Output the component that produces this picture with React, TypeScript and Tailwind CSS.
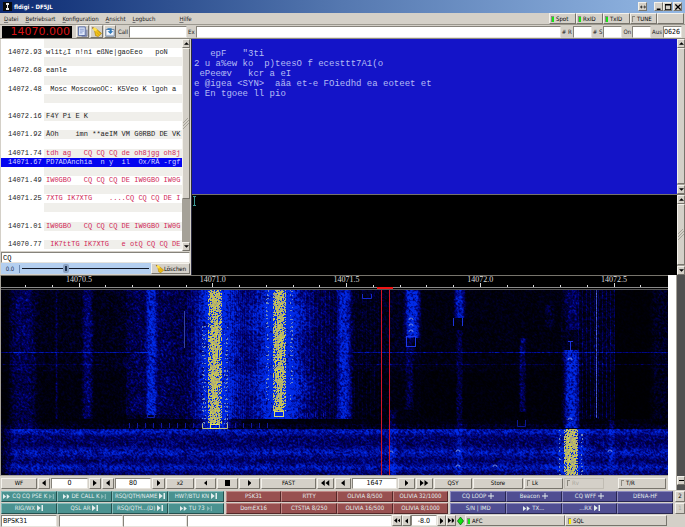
import { useEffect, useRef } from "react";
import type { ReactNode } from "react";

const BEVEL =
  "flex items-center justify-center overflow-hidden whitespace-nowrap border border-t-[#f4f2ec] border-l-[#f4f2ec] border-r-[#77746c] border-b-[#77746c] bg-[#d4d0c8] text-black";
const SUNKEN =
  "min-w-0 border border-t-[#86837b] border-l-[#86837b] border-r-[#e6e3dc] border-b-[#e6e3dc] bg-white text-black outline-none";

/* ---------- small glyphs ---------- */

type Kind = "left" | "right" | "left2" | "right2" | "stop" | "up" | "down" | "next" | "plus";

const GLYPHS: Record<Kind, { w: number; d: string }> = {
  left: { w: 5, d: "M5 0V8L0 4Z" },
  right: { w: 5, d: "M0 0V8L5 4Z" },
  left2: { w: 11, d: "M5 0V8L0 4ZM11 0V8L6 4Z" },
  right2: { w: 11, d: "M0 0V8L5 4ZM6 0V8L11 4Z" },
  stop: { w: 7, d: "M0 0H7V8H0Z" },
  up: { w: 8, d: "M0 6H8L4 2Z" },
  down: { w: 8, d: "M0 2H8L4 6Z" },
  next: { w: 8, d: "M0 0V8L5 4ZM6 0H8V8H6Z" },
  plus: { w: 8, d: "M3.4 0H4.6V3.4H8V4.6H4.6V8H3.4V4.6H0V3.4H3.4Z" },
};

function Glyph({ kind, className = "h-[6px]" }: { kind: Kind; className?: string }) {
  const g = GLYPHS[kind];
  return (
    <svg viewBox={`0 0 ${g.w} 8`} className={`${className} w-auto shrink-0`} fill="currentColor" aria-hidden="true">
      <path d={g.d} />
    </svg>
  );
}

function Broom({ className }: { className: string }) {
  return (
    <svg viewBox="0 0 12 12" className={className} aria-hidden="true">
      <path d="M1.5 1.5L5 5" stroke="#9a6b1e" strokeWidth="1.6" />
      <path d="M4 5.5L6 3.5L11.5 8L8 11.5L5 10.5Z" fill="#f2c318" stroke="#a87b06" strokeWidth="0.7" />
      <path d="M2.5 2L4.5 1.5L7 4L4.5 6L2 4Z" fill="#ffe04a" />
      <path d="M6.5 7L9 10M8 6L10.5 8.5" stroke="#b98a0a" strokeWidth="0.6" />
    </svg>
  );
}

/* ---------- title bar and menu ---------- */

function TitleBar() {
  return (
    <header className="flex h-[13px] shrink-0 items-center bg-linear-to-r from-[#0c2a72] via-[#5578b0] to-[#94b8e4] pl-[2px] pr-[3px]">
      <svg viewBox="0 0 9 9" className="ml-px h-[9px] w-[9px]" aria-hidden="true">
        <rect width="9" height="9" fill="#0a0a0a" />
        <path d="M3 1H6V3H5V6H6V8H3V6H4V3H3Z" fill="#e8e8e8" />
      </svg>
      <h1 className="ml-[2px] flex-1 text-[6px] font-bold text-white">fldigi - DF5JL</h1>
      <button aria-label="Switch" className={`${BEVEL} mr-[7px] h-[9px] w-[9px]`}>
        <svg viewBox="0 0 10 6" className="h-[4px] w-[6px]" aria-hidden="true">
          <path d="M0 3L3 0V6ZM10 3L7 0V6ZM2 2.5H8V3.5H2Z" fill="#222" />
        </svg>
      </button>
      <button aria-label="Minimize" className={`${BEVEL} h-[9px] w-[9px]`}>
        <svg viewBox="0 0 8 8" className="h-[6px] w-[6px]" aria-hidden="true">
          <path d="M1 6H6V8H1Z" />
        </svg>
      </button>
      <button aria-label="Maximize" className={`${BEVEL} h-[9px] w-[9px]`}>
        <svg viewBox="0 0 8 8" className="h-[6px] w-[6px]" aria-hidden="true">
          <path d="M0 0H8V8H0ZM1 2V7H7V2Z" fillRule="evenodd" />
        </svg>
      </button>
      <button aria-label="Close" className={`${BEVEL} ml-px h-[9px] w-[9px]`}>
        <svg viewBox="0 0 8 8" className="h-[6px] w-[6px]" aria-hidden="true">
          <path d="M0.5 0.5L7.5 7.5M7.5 0.5L0.5 7.5" stroke="#000" strokeWidth="1.7" />
        </svg>
      </button>
    </header>
  );
}

function Led({ color }: { color: string }) {
  return <span className={`mr-[2px] h-[6px] w-[3px] shrink-0 border-l border-t border-[#8b887f] ${color}`} />;
}

const MENUS = [
  { label: "atei", key: "D", gap: "mr-[7px]" },
  { label: "etriebsart", key: "B", gap: "mr-[7px]" },
  { label: "onfiguration", key: "K", gap: "mr-[7px]" },
  { label: "nsicht", key: "A", gap: "mr-[7px]" },
  { label: "ogbuch", key: "L", gap: "mr-[24px]" },
  { label: "ilfe", key: "H", gap: "" },
];

const TOGGLES = [
  { label: "Spot", color: "bg-[#14e414]" },
  { label: "RxID", color: "bg-[#14e414]" },
  { label: "TxID", color: "bg-[#14e414]" },
  { label: "TUNE", color: "bg-[#d4d0c8]" },
];

function MenuBar() {
  return (
    <nav className="flex h-[12px] shrink-0 items-center border-b border-[#9b988f] pl-[4px] pr-px">
      {MENUS.map((m) => (
        <button key={m.key} className={m.gap}>
          <span className="underline decoration-[#777] decoration-1 underline-offset-1">{m.key}</span>
          {m.label}
        </button>
      ))}
      <div className="flex-1" />
      {TOGGLES.map((t) => (
        <button key={t.label} className={`${BEVEL} h-[11px] w-[27px] justify-start pl-px`}>
          <Led color={t.color} />
          {t.label}
        </button>
      ))}
      <div className={`${BEVEL} h-[11px] w-[27px]`} />
    </nav>
  );
}

function Field({ label, value, wide }: { label: string; value?: string; wide?: string }) {
  return (
    <label className={`flex h-full items-center ${wide ?? ""}`}>
      <span className="whitespace-nowrap px-px">{label}</span>
      <input
        defaultValue={value}
        className={`${SUNKEN} h-[12px] text-[7px] ${wide ? "flex-1" : "w-[19px]"}`}
      />
    </label>
  );
}

function ToolBar() {
  return (
    <div className="flex h-[14px] shrink-0 items-center border-b border-[#8b887f] pl-[2px] pr-[3px]">
      <output className="mr-[4px] flex h-[12px] w-[70px] items-center justify-end bg-black pr-[2px] text-[11px] leading-none text-[#d81414] font-['DejaVu_Sans',sans-serif]">
        14070.000
      </output>
      <div className="mr-px flex gap-px">
        <button aria-label="Edit log" className={`${BEVEL} h-[13px] w-[13px]`}>
          <svg viewBox="0 0 12 12" className="h-[11px] w-[11px]" aria-hidden="true">
            <path d="M1.5 1H9V10.5H1.5Z" fill="#dfe8fa" stroke="#4b62a0" />
            <path d="M3 3.5H7.5M3 5.5H7.5M3 7.5H6" stroke="#7288c4" strokeWidth="0.9" />
            <path d="M10.8 4V11H5" fill="none" stroke="#55629a" />
          </svg>
        </button>
        <button aria-label="Clear entries" className={`${BEVEL} h-[13px] w-[13px]`}>
          <Broom className="h-[11px] w-[11px]" />
        </button>
        <button aria-label="Save entry" className={`${BEVEL} h-[13px] w-[12px]`}>
          <svg viewBox="0 0 12 12" className="h-[10px] w-[10px]" aria-hidden="true">
            <path d="M1 3H11V11H1Z" fill="#f6f9ff" stroke="#5b7696" />
            <path d="M3 1.5H8V5H10L6.5 8.5L3 5H5.5V3.5H3Z" fill="#2f78b8" />
            <path d="M2 10H10" stroke="#9fb2c8" />
          </svg>
        </button>
      </div>
      <Field label="Call" wide="w-[70px]" />
      <Field label="Ex" wide="flex-1" />
      <Field label="# R" />
      <Field label="# S" />
      <Field label="On" />
      <Field label="Aus" value="0626" />
    </div>
  );
}

/* ---------- signal browser ---------- */

const ROWS: { f?: string; t?: string; tone?: "cq" | "sel" }[] = [
  {},
  { f: "14072.93", t: "wlit¿I n!ni eßNe|gaoEeo   poN" },
  {},
  { f: "14072.68", t: "eanle" },
  {},
  { f: "14072.48", t: " Mosc MoscowoOC: K5Veo K lgoh a" },
  {},
  {},
  { f: "14072.16", t: "F4Y Pi E K" },
  {},
  { f: "14071.92", t: "ÅOh    imn **aeIM VM G0RBD DE VK" },
  {},
  { f: "14071.74", t: "tdh ag   CQ CQ CQ de oh8jgg oh8j", tone: "cq" },
  { f: "14071.67", t: "PD7ADAnchia  n y  il  Ox/RÅ -rgf", tone: "sel" },
  {},
  { f: "14071.49", t: "IW0GBO   CQ CQ CQ DE IW0GBO IW0G", tone: "cq" },
  {},
  { f: "14071.25", t: "7XTG IK7XTG    ....CQ CQ CQ DE I", tone: "cq" },
  {},
  {},
  { f: "14071.01", t: "IW0GBO   CQ CQ CQ DE IW0GBO IW0G", tone: "cq" },
  {},
  { f: "14070.77", t: " IK7ttTG IK7XTG   e otQ CQ CQ DE", tone: "cq" },
];

function ScrollBar({ thumb, grip }: { thumb: string; grip: string }) {
  return (
    <div className="flex w-[8px] shrink-0 flex-col bg-[#a5a198]">
      <button aria-label="Scroll up" className={`${BEVEL} h-[9px] w-[8px]`}>
        <Glyph kind="up" className="h-[5px]" />
      </button>
      <div className={`${BEVEL} w-[8px] ${thumb}`}>
        <svg viewBox="0 0 6 12" className={`h-[12px] w-[6px] ${grip}`} aria-hidden="true">
          <path d="M0 5L5 0M0 8L6 2M0 11L6 5" stroke="#9b978d" strokeWidth="0.8" />
        </svg>
      </div>
      <div className="flex-1" />
      <button aria-label="Scroll down" className={`${BEVEL} mt-auto h-[9px] w-[8px]`}>
        <Glyph kind="down" className="h-[5px]" />
      </button>
    </div>
  );
}

function SignalBrowser() {
  return (
    <section className="flex w-[191px] shrink-0 flex-col bg-[#d4d0c8] pl-px pr-px">
      <div className="flex h-[212px] bg-white">
        <ul className="flex min-w-0 flex-1 flex-col pb-[2px] text-[7px] leading-none font-['Liberation_Mono',monospace]">
          {ROWS.map((r, i) => (
            <li key={i} className="min-h-0 flex-1">
              <button
                className={`flex h-full w-full whitespace-pre text-left ${
                  r.tone === "sel" ? "bg-[#0404f0] text-[#d8dcff]" : r.tone === "cq" ? "text-[#d02858]" : "text-[#222]"
                }`}
              >
                <span
                  className={`flex h-full w-[43px] shrink-0 items-center pl-[7px] ${
                    r.tone === "sel" ? "text-[#d8dcff]" : "text-[#222]"
                  }`}
                >
                  {r.f}
                </span>
                <span
                  className={`flex h-full min-w-0 flex-1 items-center overflow-hidden pl-[2px] ${
                    r.tone !== "sel" && i % 2 === 0 ? "bg-[#f0efeb]" : ""
                  }`}
                >
                  {r.t}
                </span>
              </button>
            </li>
          ))}
        </ul>
        <ScrollBar thumb="h-[151px]" grip="" />
      </div>
      <input
        aria-label="Search pattern"
        defaultValue="CQ"
        className={`${SUNKEN} mt-px h-[11px] px-px text-[7px] leading-none font-['Liberation_Mono',monospace]`}
      />
      <div className="flex h-[11px] items-center bg-[#b4cff0]">
        <output className="w-[19px] border-r border-[#6d8bb5] text-center text-[#14284c]">0.0</output>
        <input
          type="range"
          aria-label="Squelch level"
          defaultValue={34}
          className="mx-[2px] h-[9px] min-w-0 flex-1 appearance-none bg-transparent [&::-webkit-slider-runnable-track]:h-px [&::-webkit-slider-runnable-track]:bg-[#101828] [&::-webkit-slider-thumb]:-mt-[4px] [&::-webkit-slider-thumb]:h-[9px] [&::-webkit-slider-thumb]:w-[6px] [&::-webkit-slider-thumb]:appearance-none [&::-webkit-slider-thumb]:rounded-[2px] [&::-webkit-slider-thumb]:border-2 [&::-webkit-slider-thumb]:border-[#8da3c2] [&::-webkit-slider-thumb]:bg-[#1f3350]"
        />
        <button className={`${BEVEL} h-[11px] w-[39px]`}>
          <Broom className="h-[9px] w-[9px]" />
          Löschen
        </button>
      </div>
    </section>
  );
}

const RX_TEXT = `
   epF   "3ti
2 u a%ew ko  p)teesO f ecesttt7A1(o
 ePeeœv   kcr a eI
e @igea <SYN>  aãa et-e FOiedhd ea eoteet et
e En tgoee ll pio`;

function MessagePanes() {
  return (
    <section className="flex min-w-0 flex-1 flex-col border-l border-[#2c2c40] text-[9px] font-['Liberation_Mono',monospace]">
      <div className="flex h-[155px] bg-[#1414c8]">
        <pre className="min-w-0 flex-1 overflow-hidden pl-[2px] leading-[10px] text-[#b4bcf4] font-['Liberation_Mono',monospace]">
          {"\n" + RX_TEXT.slice(1)}
        </pre>
        <ScrollBar thumb="flex-[99]" grip="hidden" />
      </div>
      <div className="relative flex flex-1 border-t border-[#77746c] bg-black">
        <textarea
          aria-label="Transmit text"
          className="min-w-0 flex-1 resize-none bg-transparent text-white outline-none"
        />
        <svg viewBox="0 0 3 10" className="absolute left-px top-px h-[10px] w-[3px]" aria-hidden="true">
          <path d="M0 0H3V1H2V9H3V10H0V9H1V1H0Z" fill="#3f9a98" />
        </svg>
        <ScrollBar thumb="flex-[99]" grip="" />
      </div>
    </section>
  );
}

/* ---------- waterfall ---------- */

const WF_W = 667;
const WF_H = 185;

/* [centre, half width, from row, to row, level] of each signal trace */
const TRACES: number[][] = [
  [22, 12, 0, 140, 58],
  [55, 1, 0, 129, 50],
  [86, 5, 0, 129, 78],
  [150, 5, 0, 125, 120],
  [150, 25, 0, 125, 40],
  [214, 22, 0, 138, 95],
  [214, 12, 0, 138, 75],
  [214, 45, 0, 129, 34],
  [279, 26, 0, 129, 95],
  [279, 14, 0, 129, 85],
  [279, 58, 0, 129, 40],
  [279, 40, 15, 40, 30],
  [279, 40, 85, 105, 30],
  [343, 7, 0, 129, 140],
  [411, 7, 0, 48, 190],
  [408, 4, 48, 120, 48],
  [458, 5, 0, 28, 150],
  [458, 3, 40, 185, 55],
  [521, 3, 48, 122, 70],
  [548, 4, 15, 38, 30],
  [571, 6, 0, 40, 65],
  [570, 7, 60, 138, 175],
  [570, 16, 139, 185, 65],
  [391, 4, 120, 185, 50],
  [610, 3, 130, 185, 50],
  [660, 10, 0, 129, 24],
];

function makeRandom(seed: number) {
  let s = seed;
  return () => {
    s = (s * 1664525 + 1013904223) >>> 0;
    return s / 4294967296;
  };
}

function paintWaterfall(ctx: CanvasRenderingContext2D) {
  const rnd = makeRandom(77);
  const noise = Array.from({ length: (WF_W + 3) * (WF_H + 3) }, rnd);
  const at = (x: number, y: number) => noise[y * (WF_W + 3) + x];
  const img = ctx.createImageData(WF_W, WF_H);
  for (let y = 0; y < WF_H; y++) {
    for (let x = 0; x < WF_W; x++) {
      let base: number;
      if (y >= 139) {
        const near = (c: number, s: number) => Math.exp(-((y - c) * (y - c)) / s);
        base = (98 + 72 * near(141, 14) + 66 * near(162, 24) + 72 * near(177, 14)) * Math.min(1, (x + 3) / 16);
      } else if (y >= 129) {
        base = y > 133 ? 32 : 14;
      } else {
        base = x < 8 ? 10 : x < 125 ? 25 : x < 345 ? 40 : x < 420 ? 28 : x < 560 ? 16 : x < 614 ? 32 : 6;
        if (y > 80 && (x < 125 || x > 350)) base *= 0.6;
      }
      for (const [cx, hw, y0, y1, lv] of TRACES) {
        const dx = (x - cx) / hw;
        if (y >= y0 && y < y1 && Math.abs(dx) < 1.8) base += lv * Math.exp(-dx * dx * dx * dx);
      }
      if (y < 129) {
        if (Math.abs(x - 279) < 60 && Math.abs(x - 279) > 14 && x % 4 === 0) base += 30;
        if (Math.abs(x - 214) < 30 && Math.abs(x - 214) > 14 && x % 4 === 2) base += 28;
        if (x > 350 && x < 381 && x % 4 === 1) base += 16;
        if (x > 575 && x < 614 && x % 4 === 1) base += 50;
        if (y === 62 && (x < 150 || x > 350)) base += 110;
        if (y === 74 && (x < 100 || x > 350)) base += 40;
      }
      const n = (at(x, y) * 2 + at(x + 1, y) + at(x, y + 1) + at(x + 1, y + 1)) / 5;
      const rough = 0.05 + n * n * 3.4;
      const soft = 0.3 + n * 1.4;
      const mix = Math.min(1, Math.max(0, (base - 30) / 90));
      let v = base * (rough * (1 - mix) + soft * mix);
      let pale = 0;
      if (y < 128 && x === 595) pale = 0.6 + at(x, y) * 0.4;
      if (y > 20 && y < 58 && x === 183) pale = 0.7;
      v = Math.min(232, v);

      const side1 = Math.abs(x - 213.5);
      const side2 = Math.abs(x - 278);
      const side3 = Math.abs(x - 569.5);
      const wob = Math.sin(y / 6) * 1.3;
      const lace = (x + y) % 3 === 0 ? 0.2 : 0;
      let hot = 0;
      if (y < 134) {
        if (side1 < 4 + wob) hot = 0.9;
        else if (side1 < 7) hot = 0.45 + lace;
      }
      if (y < 121) {
        if (side2 < 3.5 + wob) hot = 0.88;
        else if (side2 < 6.5) hot = 0.45 + lace;
      }
      if (y >= 139) {
        if (side3 < 5 + wob) hot = 0.9;
        else if (side3 < 7.5) hot = 0.5 + lace;
      }
      /* weaker side lobes show as pale, broken dots */
      if (
        (y > 35 && y < 134 && side1 > 9 && side1 < 13) ||
        (y < 110 && side2 > 10 && side2 < 14) ||
        (y >= 139 && side3 > 10 && side3 < 12)
      ) {
        if (y % 4 < 2 && at(x, y) < 0.35) pale = 1.4;
      }
      const o = (y * WF_W + x) * 4;
      if (at(x, y) < hot) {
        const k = 0.72 + at(x + 1, y + 1) * 0.28;
        img.data[o] = 214 * k;
        img.data[o + 1] = 212 * k;
        img.data[o + 2] = 66 + (1 - k) * 260;
      } else if (pale > 0) {
        img.data[o] = 75 * pale;
        img.data[o + 1] = 95 * pale;
        img.data[o + 2] = pale > 1 ? 190 : 235 * pale;
      } else {
        img.data[o] = 0;
        img.data[o + 1] = v > 110 ? (v - 110) * 0.35 : 0;
        img.data[o + 2] = v;
      }
      img.data[o + 3] = 255;
    }
  }
  ctx.putImageData(img, 0, 0);

  /* start-of-transmission marks: open boxes at the lower end of a trace */
  const cup = (x: number, y: number, w: number, h: number, color: string) => {
    ctx.strokeStyle = color;
    ctx.beginPath();
    ctx.moveTo(x + 0.5, y);
    ctx.lineTo(x + 0.5, y + h + 0.5);
    ctx.lineTo(x + w + 0.5, y + h + 0.5);
    ctx.lineTo(x + w + 0.5, y);
    ctx.stroke();
  };
  const box = (x: number, y: number, w: number, h: number, color: string) => {
    ctx.strokeStyle = color;
    ctx.strokeRect(x + 0.5, y + 0.5, w, h);
  };
  box(273, 121, 9, 5, "#d8d868");
  cup(201, 134, 8, 4, "#b8bc80");
  box(209, 134, 9, 4, "#ecec60");
  cup(218, 134, 8, 4, "#b8bc80");
  box(405, 46, 9, 10, "#1c38e8");
  cup(361, 4, 9, 4, "#1428d0");
  cup(146, 123, 7, 4, "#1020a8");
  cup(516, 130, 8, 6, "#0c1894");
  ctx.fillStyle = "#1c34dc";
  ctx.fillRect(452, 28, 1, 8);
  ctx.fillRect(461, 28, 1, 8);
  ctx.fillRect(569, 51, 1, 10);
  ctx.fillRect(567, 51, 5, 1);
  ctx.fillStyle = "#1018a0";
  for (let x = 128; x < 198; x += 8) ctx.fillRect(x, 133, 1, 5);
  for (let x = 234; x < 270; x += 8) ctx.fillRect(x, 133, 1, 5);
  for (let x = 290; x < 325; x += 8) ctx.fillRect(x, 123, 1, 4);
  ctx.strokeStyle = "#6a84dc";
  for (const [x, y] of [
    [410, 30],
    [410, 36],
    [410, 42],
    [569, 70],
    [569, 130],
    [390, 163],
    [457, 162],
    [457, 177],
    [494, 177],
    [609, 162],
  ]) {
    ctx.beginPath();
    ctx.arc(x, y, 2, Math.PI, Math.PI * 2);
    ctx.stroke();
  }

  /* receive bandwidth markers */
  ctx.fillStyle = "#d01428";
  ctx.fillRect(380, 0, 1, WF_H);
  ctx.fillRect(388, 0, 1, WF_H);
}

const FREQS = ["14070.5", "14071.0", "14071.5", "14072.0", "14072.5"];

function Waterfall() {
  const ref = useRef<HTMLCanvasElement>(null);
  useEffect(() => {
    const ctx = ref.current?.getContext("2d");
    if (ctx) paintWaterfall(ctx);
  }, []);
  return (
    <div className="border-l border-[#a5a198] bg-black">
      <svg viewBox="0 0 667 15" className="block w-full font-['Liberation_Serif',serif]" role="img" aria-label="Frequency scale">
        <rect width="667" height="15" fill="#000" />
        <rect width="667" height="1" fill="#77746c" />
        {Array.from({ length: 24 }, (_, i) => {
          const major = i % 5 === 2;
          return <rect key={i} x={Math.round(24 + i * 26.75)} y={major ? 8 : 10} width="1" height={major ? 4 : 2} fill="#d8d8d8" />;
        })}
        {FREQS.map((f, i) => (
          <text key={f} x={78 + i * 133.75} y="7" fontSize="8" fill="#dcdcdc" textAnchor="middle">
            {f}
          </text>
        ))}
        <rect y="12" width="667" height="1" fill="#8a8a8a" />
        <rect y="14" width="667" height="1" fill="#555" />
        <rect x="376" y="12" width="16" height="2" fill="#f01414" />
      </svg>
      <canvas ref={ref} width={WF_W} height={WF_H} className="block h-[185px] w-full" role="img" aria-label="Waterfall" />
    </div>
  );
}

/* ---------- bottom controls ---------- */

function Btn({ w, label, children }: { w: string; label?: string; children: ReactNode }) {
  return (
    <button aria-label={label} className={`${BEVEL} h-[11px] ${w}`}>
      {children}
    </button>
  );
}

function Counter({ w, value, label }: { w: string; value: string; label: string }) {
  return <input aria-label={label} defaultValue={value} className={`${SUNKEN} h-[11px] text-center text-[7px] ${w}`} />;
}

function Toggle({ w, label, disabled }: { w: string; label: string; disabled?: boolean }) {
  return (
    <button
      disabled={disabled}
      className={`${BEVEL} h-[11px] justify-start pl-[2px] disabled:border-[#c0bcb3] disabled:text-[#a9a69d] ${w}`}
    >
      <Led color="bg-[#d4d0c8]" />
      {label}
    </button>
  );
}

function Controls() {
  return (
    <div className="flex h-[15px] items-center gap-px border-t border-[#a5a198] pl-px pr-[2px]">
      <Btn w="w-[36px]">WF</Btn>
      <Btn w="w-[12px]" label="Lower reference"><Glyph kind="left" /></Btn>
      <Counter w="w-[37px]" value="0" label="Reference level" />
      <Btn w="w-[12px]" label="Raise reference"><Glyph kind="right" /></Btn>
      <Btn w="w-[12px]" label="Lower range"><Glyph kind="left" /></Btn>
      <Counter w="w-[36px]" value="80" label="Range" />
      <Btn w="w-[13px]" label="Raise range"><Glyph kind="right" /></Btn>
      <Btn w="w-[28px]">x2</Btn>
      <Btn w="w-[21px]" label="Shift left"><Glyph kind="left" /></Btn>
      <Btn w="w-[21px]" label="Centre"><Glyph kind="stop" /></Btn>
      <Btn w="w-[21px]" label="Shift right"><Glyph kind="right" /></Btn>
      <Btn w="w-[55px]">FAST</Btn>
      <Btn w="w-[17px]" label="Carrier down fast"><Glyph kind="left2" /></Btn>
      <Btn w="w-[16px]" label="Carrier down"><Glyph kind="left" /></Btn>
      <Counter w="w-[45px]" value="1647" label="Carrier" />
      <Btn w="w-[17px]" label="Carrier up"><Glyph kind="right" /></Btn>
      <Btn w="w-[17px]" label="Carrier up fast"><Glyph kind="right2" /></Btn>
      <Btn w="w-[38px]">QSY</Btn>
      <Btn w="w-[50px]">Store</Btn>
      <Toggle w="w-[39px]" label="Lk" />
      <Toggle w="w-[40px]" label="Rv" disabled />
      <div className="flex-1" />
      <Toggle w="w-[48px]" label="T/R" />
    </div>
  );
}

type Macro = { t: string; pre?: Kind; post?: Kind; dim?: boolean };

const TEAL: Macro[] = [
  { t: "CQ CQ PSE K", pre: "right2", post: "next", dim: true },
  { t: "DE CALL K", pre: "right2", post: "next", dim: true },
  { t: "RSQ/QTH/NAME", post: "next" },
  { t: "HW?/BTU KN", post: "next" },
  { t: "RIG/WX", post: "next" },
  { t: "QSL AR", post: "next" },
  { t: "RSQ/QTH...(D)", post: "next" },
  { t: "TU 73", pre: "right2", post: "next", dim: true },
];
const RED: Macro[] = [
  { t: "PSK31" },
  { t: "RTTY" },
  { t: "OLIVIA 8/500" },
  { t: "OLIVIA 32/1000" },
  { t: "DomEX16" },
  { t: "CTSTIA 8/250" },
  { t: "OLIVIA 16/500" },
  { t: "OLIVIA 8/1000" },
];
const VIOLET: Macro[] = [
  { t: "CQ LOOP", post: "plus" },
  { t: "Beacon", post: "plus" },
  { t: "CQ WFF", post: "plus" },
  { t: "DENA-HF" },
  { t: "S/N | IMD" },
  { t: "TX...", pre: "right2" },
  { t: "...RX", post: "next" },
  { t: "" },
];

function MacroGroup({ items, color, name }: { items: Macro[]; color: string; name: string }) {
  return (
    <div className="grid min-w-0 flex-1 grid-cols-4 gap-y-px" role="group" aria-label={name}>
      {items.map((m, i) => (
        <button
          key={i}
          aria-label={m.t === "" ? "Empty macro" : undefined}
          className={`flex h-[11px] min-w-0 items-center justify-center gap-[2px] overflow-hidden whitespace-nowrap border text-[#e4eeee] ${color}`}
        >
          {m.pre && <Glyph kind={m.pre} className="h-[5px]" />}
          {m.t}
          {m.post && <Glyph kind={m.post} className={m.dim ? "h-[5px] opacity-40" : "h-[6px]"} />}
        </button>
      ))}
    </div>
  );
}

function MacroBar() {
  return (
    <div className="flex h-[24px] items-center gap-[2px] pl-px">
      <MacroGroup
        name="Messages"
        items={TEAL}
        color="bg-[#4a9290] border-t-[#86bcba] border-l-[#86bcba] border-r-[#24504e] border-b-[#24504e]"
      />
      <MacroGroup
        name="Modes"
        items={RED}
        color="bg-[#985050] border-t-[#c08886] border-l-[#c08886] border-r-[#542828] border-b-[#542828]"
      />
      <MacroGroup
        name="Calls"
        items={VIOLET}
        color="bg-[#504e92] border-t-[#8a88bc] border-l-[#8a88bc] border-r-[#282650] border-b-[#282650]"
      />
      <div className="flex w-[10px] flex-col gap-px">
        <button className={`${BEVEL} h-[11px]`}>2</button>
        <button disabled className={`${BEVEL} h-[11px] disabled:text-[#a9a69d]`}>1</button>
      </div>
    </div>
  );
}

function StatusBar() {
  return (
    <footer className="flex h-[13px] items-center pl-px">
      <output className={`${SUNKEN} mr-[2px] flex h-[12px] w-[56px] items-center pl-px text-[7px]`}>BPSK31</output>
      <div className={`${SUNKEN} h-[12px] w-[64px]`} />
      <div className={`${SUNKEN} h-[12px] w-[64px]`} />
      <div className={`${SUNKEN} h-[12px] flex-1`} />
      <Btn w="w-[10px]" label="Attenuate more"><Glyph kind="left2" className="h-[5px]" /></Btn>
      <Btn w="w-[9px]" label="Attenuate"><Glyph kind="left" /></Btn>
      <Counter w="w-[26px]" value="-8.0" label="Transmit level" />
      <Btn w="w-[9px]" label="Amplify"><Glyph kind="right" /></Btn>
      <Btn w="w-[10px]" label="Amplify more"><Glyph kind="right2" className="h-[5px]" /></Btn>
      <svg viewBox="0 0 8 10" className="mx-px h-[10px] w-[7px]" aria-hidden="true">
        <path d="M4 0.5L7.5 5L4 9.5L0.5 5Z" fill="#12e012" stroke="#0a5a0a" strokeWidth="0.8" />
      </svg>
      <button className={`${BEVEL} h-[11px] w-[100px] justify-start pl-px`}>
        <Led color="bg-[#14e414]" />
        AFC
      </button>
      <button className={`${BEVEL} mr-[18px] h-[11px] w-[102px] justify-start pl-[2px]`}>
        <Led color="bg-[#f8f000]" />
        SQL
      </button>
    </footer>
  );
}

export default function App() {
  return (
    <div className="flex min-h-screen w-full flex-col bg-[#d4d0c8] text-[6px] leading-[8px] text-[#1a1a1a] font-['DejaVu_Sans_Condensed','DejaVu_Sans',sans-serif]">
      <TitleBar />
      <MenuBar />
      <ToolBar />
      <main>
        <div className="flex h-[236px]">
          <SignalBrowser />
          <MessagePanes />
        </div>
        <div className="flex">
          <div className="min-w-0 flex-1">
            <Waterfall />
            <Controls />
          </div>
          <div className="w-[8px] bg-white" />
          <div className="flex w-[9px] flex-col justify-end border-l border-[#a5a198] bg-[#505050] pb-[5px]">
            <div className={`${BEVEL} h-[9px]`}>
              <span className="h-px w-[5px] bg-black" />
            </div>
          </div>
        </div>
        <MacroBar />
      </main>
      <StatusBar />
    </div>
  );
}
